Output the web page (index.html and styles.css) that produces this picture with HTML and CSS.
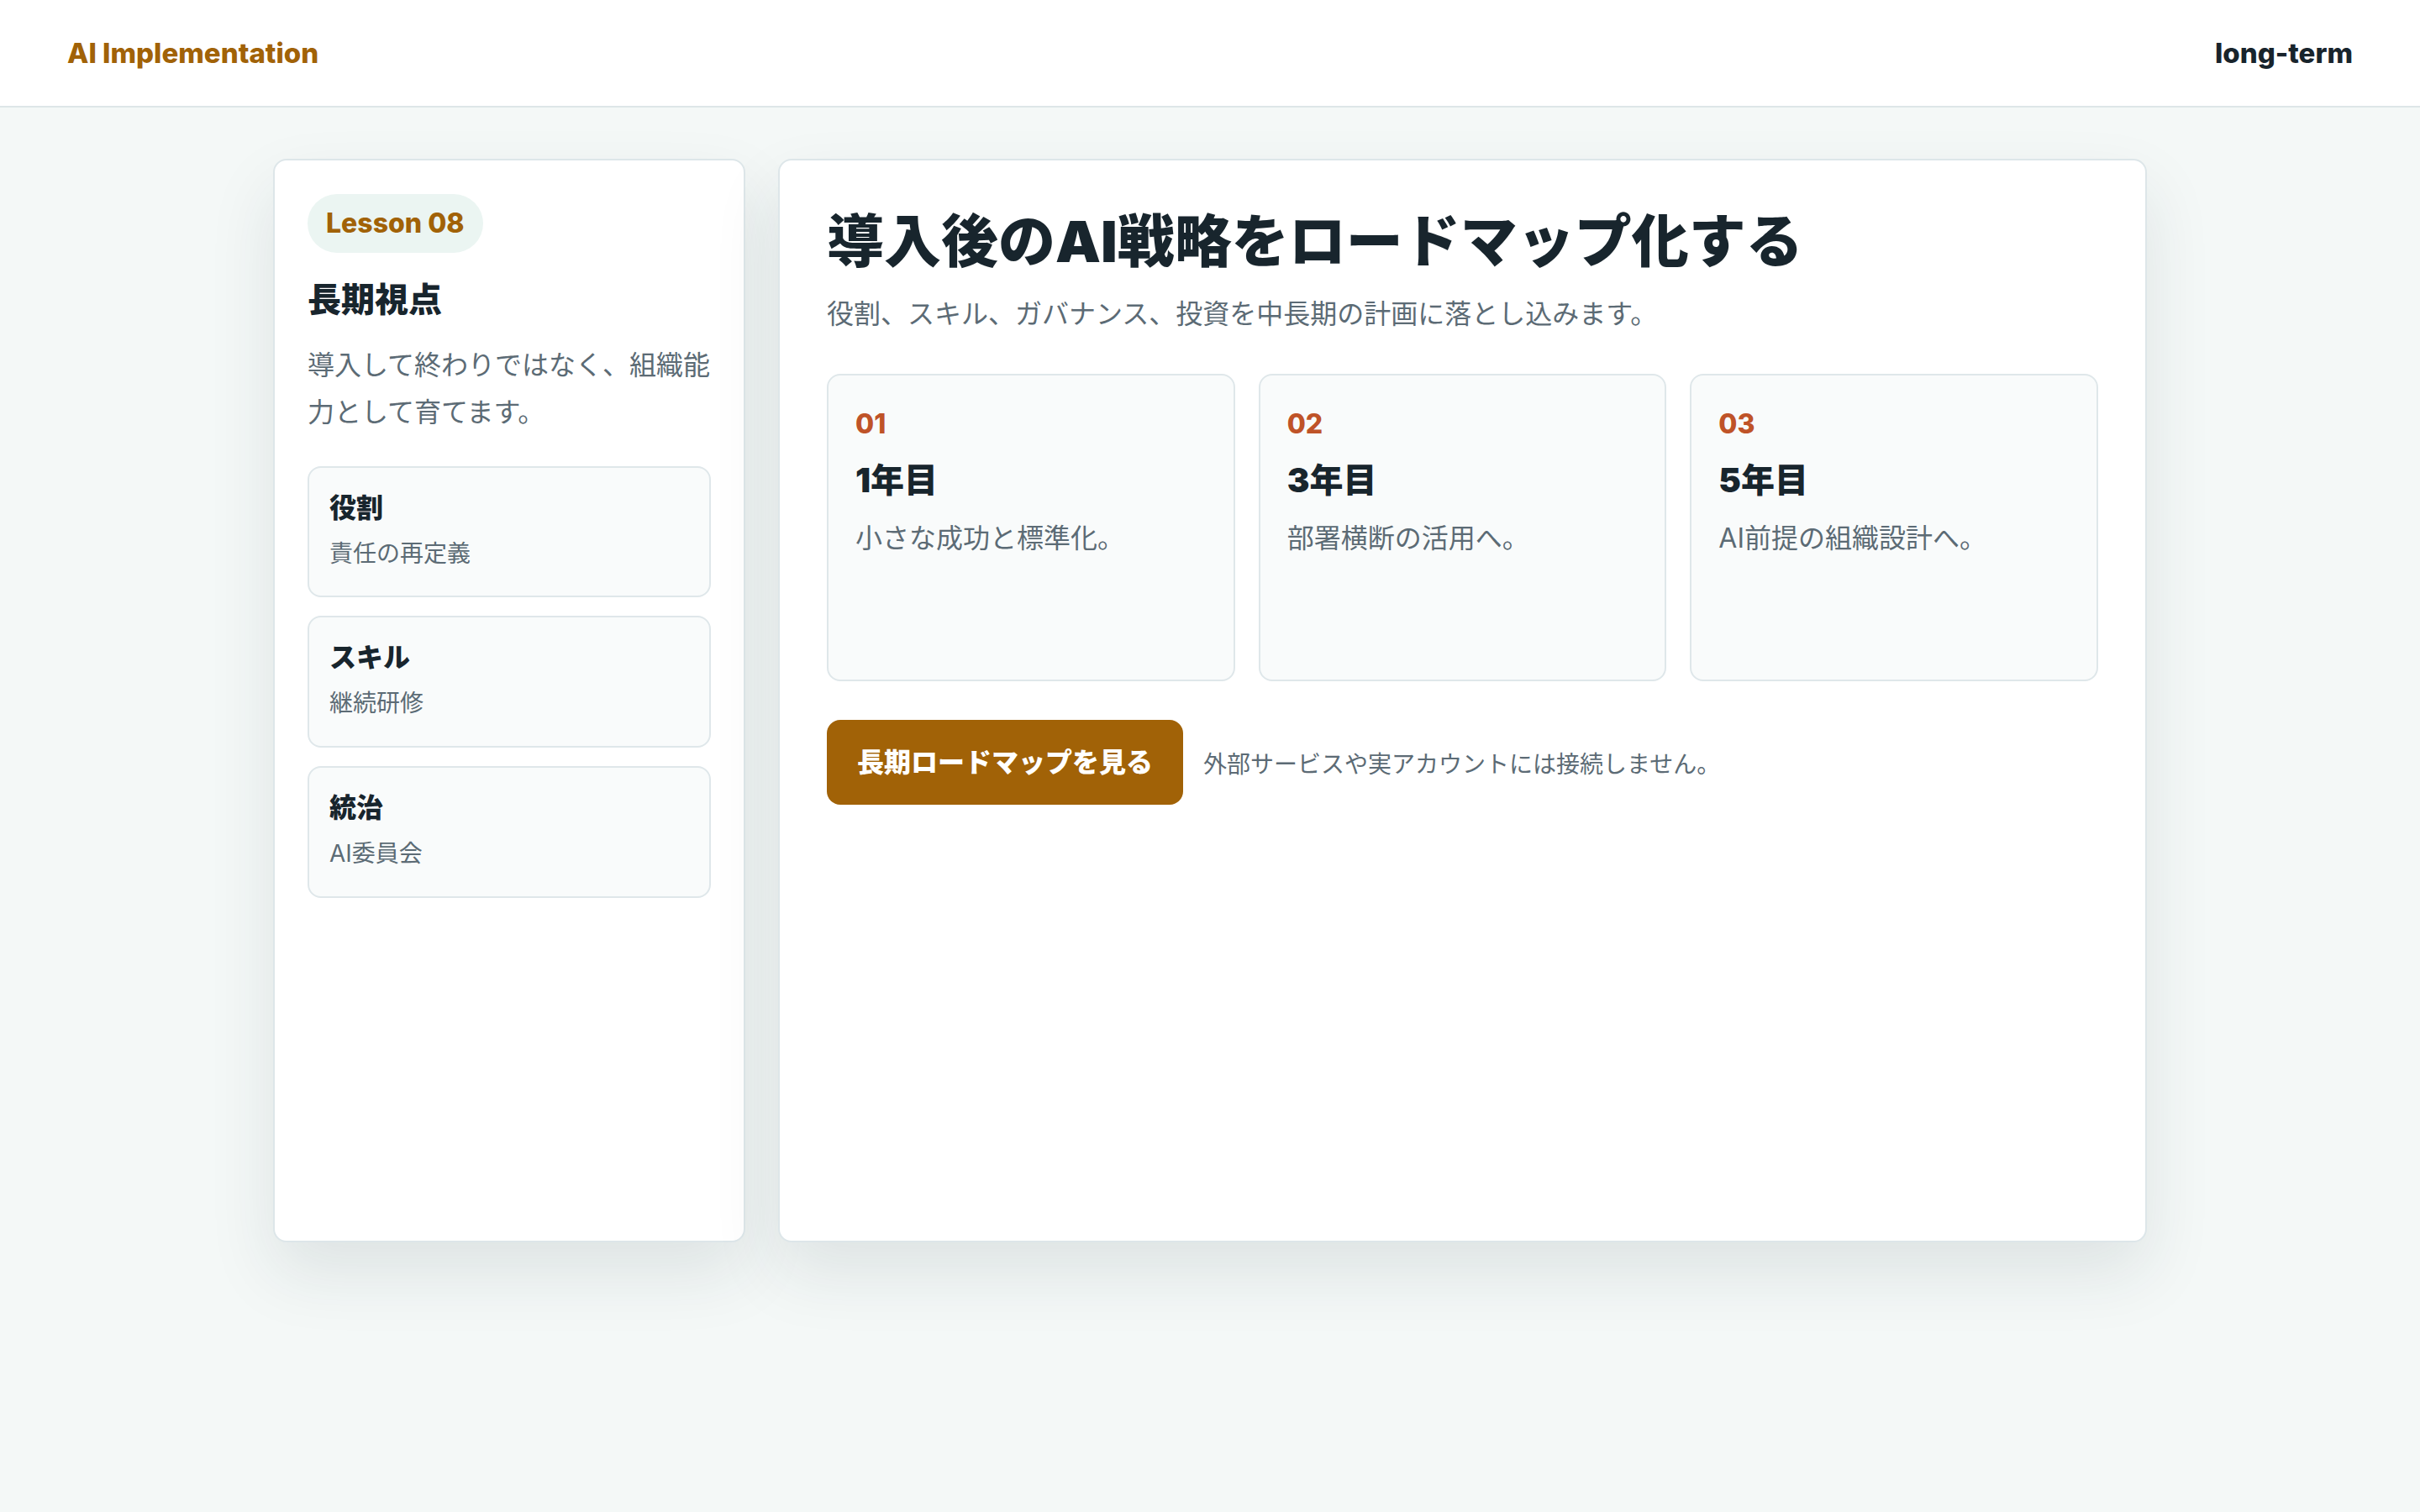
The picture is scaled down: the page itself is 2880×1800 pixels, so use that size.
FILE: index.html
```html
<!DOCTYPE html>
<html lang="ja">
<head>
    <meta charset="UTF-8">
    <meta name="viewport" content="width=device-width, initial-scale=1.0">
    <title>AI Implementation - Lesson 08</title>
    <link rel="stylesheet" href="styles.css">
</head>
<body>
    <header class="topbar">
        <span class="brand">AI Implementation</span>
        <span class="topic">long-term</span>
    </header>

    <main class="layout">
        <aside class="panel side">
            <span class="badge">Lesson 08</span>
            <h2>長期視点</h2>
            <p class="lead">導入して終わりではなく、組織能力として育てます。</p>
            <ul class="points">
                <li><strong>役割</strong><span>責任の再定義</span></li>
                <li><strong>スキル</strong><span>継続研修</span></li>
                <li><strong>統治</strong><span>AI委員会</span></li>
            </ul>
        </aside>

        <section class="panel main">
            <h1>導入後のAI戦略をロードマップ化する</h1>
            <p class="sub">役割、スキル、ガバナンス、投資を中長期の計画に落とし込みます。</p>

            <div class="steps">
                <article class="step">
                    <span class="num">01</span>
                    <h3>1年目</h3>
                    <p>小さな成功と標準化。</p>
                </article>
                <article class="step">
                    <span class="num">02</span>
                    <h3>3年目</h3>
                    <p>部署横断の活用へ。</p>
                </article>
                <article class="step">
                    <span class="num">03</span>
                    <h3>5年目</h3>
                    <p>AI前提の組織設計へ。</p>
                </article>
            </div>

            <div class="actions">
                <button type="button">長期ロードマップを見る</button>
                <span class="note">外部サービスや実アカウントには接続しません。</span>
            </div>
        </section>
    </main>
</body>
</html>
```

FILE: styles.css
```css
body {
    margin: 0;
    min-height: 100vh;
    background: #f4f8f7;
    color: #18252d;
    font-family: Inter, "Noto Sans CJK JP", "Noto Sans", sans-serif;
}
.topbar {
    height: 126px;
    padding: 0 80px;
    display: flex;
    align-items: center;
    justify-content: space-between;
    background: #ffffff;
    border-bottom: 2px solid #dde6e8;
}
.brand {
    color: #a16207;
    font-size: 33px;
    font-weight: 800;
}
.topic {
    color: #18242c;
    font-size: 33px;
    font-weight: 800;
}
.layout {
    width: 2230px;
    margin: 61px auto 0;
    display: grid;
    grid-template-columns: 562px 1fr;
    gap: 39px;
}
.panel {
    box-sizing: border-box;
    min-height: 1290px;
    background: #ffffff;
    border: 2px solid #dde6e9;
    border-radius: 16px;
    box-shadow: 0 36px 80px rgba(30, 50, 60, 0.1);
}
.side {
    padding: 40px 39px;
    display: flex;
    flex-direction: column;
}
.badge {
    align-self: flex-start;
    padding: 14px 22px;
    border-radius: 999px;
    background: #ebf5f2;
    color: #a16207;
    font-size: 32px;
    font-weight: 800;
    line-height: 1.3;
}
.side h2 {
    margin: 28px 0 22px;
    font-size: 40px;
    font-weight: 900;
    line-height: 1.4;
}
.lead {
    margin: 0;
    color: #5c6b75;
    font-size: 32px;
    line-height: 1.75;
}
.points {
    list-style: none;
    margin: 36px 0 0;
    padding: 0;
    display: flex;
    flex-direction: column;
    gap: 22px;
}
.points li {
    box-sizing: border-box;
    min-height: 156px;
    padding: 24px 24px 28px;
    display: flex;
    flex-direction: column;
    gap: 8px;
    background: #f9fbfb;
    border: 2px solid #dfe7ea;
    border-radius: 16px;
}
.points strong {
    font-size: 32px;
    font-weight: 900;
    line-height: 1.5;
}
.points span {
    color: #5c6b75;
    font-size: 28px;
    line-height: 1.6;
}
.main {
    padding: 56px;
}
.main h1 {
    margin: 0;
    font-size: 68px;
    font-weight: 900;
    line-height: 1.2;
}
.sub {
    margin: 18px 0 0;
    color: #5c6b75;
    font-size: 32px;
    line-height: 1.7;
}
.steps {
    margin-top: 44px;
    display: grid;
    grid-template-columns: repeat(3, 1fr);
    gap: 28px;
}
.step {
    box-sizing: border-box;
    min-height: 366px;
    padding: 32px;
    background: #f9fbfb;
    border: 2px solid #dfe7ea;
    border-radius: 16px;
}
.num {
    display: block;
    color: #bf5328;
    font-size: 32px;
    font-weight: 800;
    line-height: 1.6;
}
.step h3 {
    margin: 14px 0;
    font-size: 40px;
    font-weight: 900;
    line-height: 1.4;
}
.step p {
    margin: 0;
    color: #5c6b75;
    font-size: 32px;
    line-height: 1.7;
}
.actions {
    margin-top: 46px;
    display: flex;
    align-items: center;
    gap: 24px;
}
.actions button {
    padding: 25px 36px;
    border: none;
    border-radius: 16px;
    background: #a16207;
    color: #ffffff;
    font: 900 32px/1.6 Inter, "Noto Sans CJK JP", sans-serif;
    cursor: pointer;
}
.note {
    color: #5c6b75;
    font-size: 28px;
}
```
